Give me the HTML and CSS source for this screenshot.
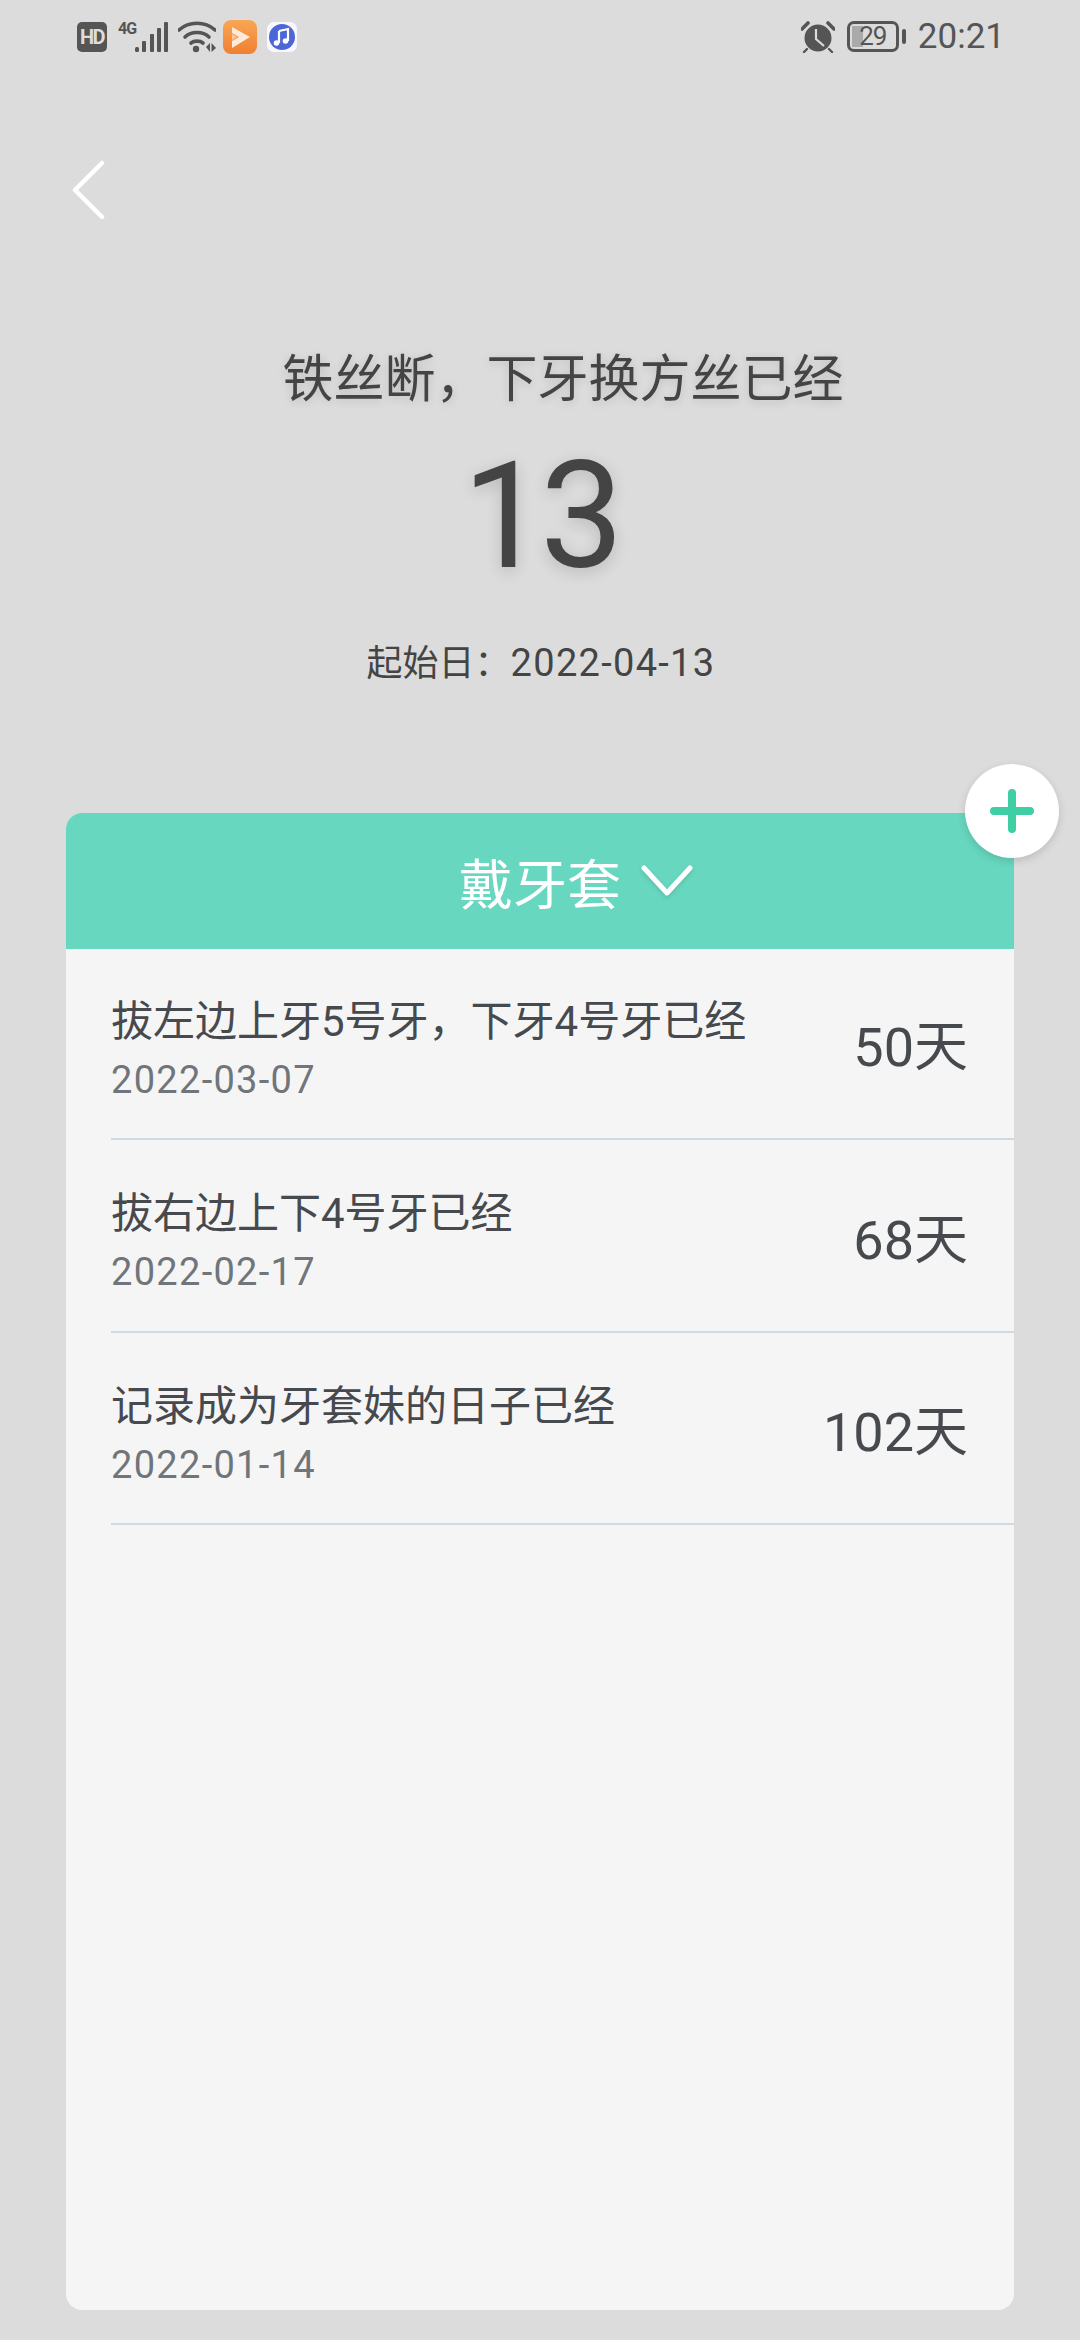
FILE: index.html
```html
<!DOCTYPE html>
<html>
<head>
    <title>戴牙套</title>
    <link rel="stylesheet" href="styles.css">
</head>
<body>
    <div class="status-bar">
        <div class="status-left">
            <span class="hd-badge">HD</span>
            <div class="signal">
                <span class="net-label">4G</span>
                <svg class="signal-bars" width="34" height="30" viewBox="0 0 34 30">
                    <rect x="0" y="25" width="4" height="5" rx="1.5"/>
                    <rect x="7" y="19" width="4" height="11" rx="1"/>
                    <rect x="15" y="12" width="4" height="18" rx="1"/>
                    <rect x="22" y="6" width="4" height="24" rx="1"/>
                    <rect x="29" y="0" width="4" height="30" rx="1"/>
                </svg>
            </div>
            <svg class="wifi" width="38" height="32" viewBox="0 0 38 32">
                <path d="M1 9 C11 0 27 0 37 9" fill="none" stroke="#555" stroke-width="3.6" stroke-linecap="round"/>
                <path d="M7 16 C13 10 25 10 31 16" fill="none" stroke="#555" stroke-width="3.6" stroke-linecap="round"/>
                <path d="M13 22 C16 19.5 22 19.5 25 22" fill="none" stroke="#555" stroke-width="3.6" stroke-linecap="round"/>
                <circle cx="18" cy="28" r="3.2" fill="#555"/>
                <path d="M28 26 L32 22 V31 Z M33.5 22 L38 27 L33.5 31 Z" fill="#555"/>
            </svg>
            <svg class="app-icon" width="34" height="34" viewBox="0 0 34 34">
                <defs>
                    <linearGradient id="orange" x1="0" y1="0" x2="0" y2="1">
                        <stop offset="0" stop-color="#f9a654"/>
                        <stop offset="1" stop-color="#f07f33"/>
                    </linearGradient>
                </defs>
                <rect width="34" height="34" rx="8" fill="url(#orange)"/>
                <path d="M9 7 L27 17 L9 28 V21 L16 17 L9 13 Z" fill="#fdeadb"/>
                <path d="M9 14 L14 17 L9 20 Z" fill="#f6c9a0"/>
            </svg>
            <svg class="app-icon" width="30" height="30" viewBox="0 0 30 30">
                <rect width="30" height="30" rx="7" fill="#f8f7fd"/>
                <circle cx="15" cy="15" r="13" fill="#4c66d8"/>
                <path d="M12 9 L21 7 V19" fill="none" stroke="#fff" stroke-width="2.2"/>
                <line x1="12" y1="9" x2="12" y2="21" stroke="#fff" stroke-width="2.2"/>
                <circle cx="9.5" cy="21" r="2.8" fill="#fff"/>
                <circle cx="18.5" cy="19" r="2.8" fill="#fff"/>
            </svg>
        </div>
        <div class="status-right">
            <svg class="alarm" width="34" height="32" viewBox="0 0 34 32">
                <circle cx="17" cy="17" r="13.5" fill="#555"/>
                <path d="M1 8 L7 2 M27 2 L33 8" stroke="#555" stroke-width="3.6" stroke-linecap="round"/>
                <path d="M6 28 L3 31 M28 28 L31 31" stroke="#555" stroke-width="2.4" stroke-linecap="round"/>
                <path d="M15 8 V18 L23 25" fill="none" stroke="#dcdcdc" stroke-width="2.2"/>
            </svg>
            <div class="battery">
                <div class="battery-body">
                    <div class="battery-fill"></div>
                    <span class="battery-num">29</span>
                </div>
                <div class="battery-tip"></div>
            </div>
            <span class="clock">20:21</span>
        </div>
    </div>

    <div class="back">
        <svg width="34" height="60" viewBox="0 0 34 60">
            <path d="M31 3 L4 30 L31 57" fill="none" stroke="#fff" stroke-width="4.5" stroke-linecap="round" stroke-linejoin="round"/>
        </svg>
    </div>

    <div class="hero">
        <div class="hero-title">铁丝断，下牙换方丝已经</div>
        <div class="hero-count">13</div>
        <div class="hero-date">起始日：<span class="num">2022-04-13</span></div>
    </div>

    <div class="card">
        <div class="add-btn">
            <svg width="44" height="44" viewBox="0 0 44 44">
                <path d="M22 4 V40 M4 22 H40" stroke="#40cfa5" stroke-width="8" stroke-linecap="round"/>
            </svg>
        </div>
        <div class="card-head">
            <span class="head-label">戴牙套
                <svg class="head-arrow" width="52" height="34" viewBox="0 0 52 34">
                    <path d="M3 4 L26 29 L49 4" fill="none" stroke="#fff" stroke-width="5" stroke-linecap="round" stroke-linejoin="round"/>
                </svg>
            </span>
        </div>
        <div class="row">
            <div class="row-info">
                <div class="row-title">拔左边上牙5号牙，下牙4号牙已经</div>
                <div class="row-date">2022-03-07</div>
            </div>
            <div class="row-days">50天</div>
        </div>
        <div class="row">
            <div class="row-info">
                <div class="row-title">拔右边上下4号牙已经</div>
                <div class="row-date">2022-02-17</div>
            </div>
            <div class="row-days">68天</div>
        </div>
        <div class="row">
            <div class="row-info">
                <div class="row-title">记录成为牙套妹的日子已经</div>
                <div class="row-date">2022-01-14</div>
            </div>
            <div class="row-days">102天</div>
        </div>
    </div>
</body>
</html>
```

FILE: styles.css
```css
body {
    font-family: Roboto, "Noto Sans CJK SC", sans-serif;
    background-color: #dcdcdc;
    color: #444;
    margin: 0;
    padding: 0;
    width: 1080px;
    height: 2340px;
    overflow: hidden;
}

/* status bar */
.status-bar {
    height: 72px;
    padding: 1px 75px 0 77px;
    box-sizing: border-box;
    display: flex;
    justify-content: space-between;
    align-items: center;
    color: #555;
}
.status-left {
    display: flex;
    align-items: center;
}
.status-right {
    display: flex;
    align-items: center;
}
.hd-badge {
    width: 30px;
    height: 30px;
    border-radius: 5px;
    background-color: #555;
    color: #ddd;
    font-size: 20px;
    font-weight: 700;
    line-height: 30px;
    text-align: center;
    letter-spacing: -1.5px;
}
.signal {
    display: flex;
    align-items: flex-end;
    margin-left: 11px;
    height: 30px;
}
.net-label {
    font-size: 16px;
    font-weight: 700;
    line-height: 14px;
    width: 17px;
    align-self: flex-start;
    letter-spacing: -1px;
}
.signal-bars {
    fill: #555;
}
.wifi {
    margin-left: 9px;
}
.app-icon {
    margin-left: 7px;
}
.app-icon + .app-icon {
    margin-left: 10px;
}
.battery {
    display: flex;
    align-items: center;
    margin-left: 12px;
}
.battery-body {
    position: relative;
    width: 52px;
    height: 31px;
    box-sizing: border-box;
    border: 3px solid #555;
    border-radius: 7px;
    text-align: center;
}
.battery-fill {
    position: absolute;
    left: 2px;
    top: 2px;
    bottom: 2px;
    width: 11px;
    background-color: #aaa;
}
.battery-num {
    position: relative;
    font-size: 26px;
    line-height: 25px;
    letter-spacing: -1px;
    display: block;
}
.battery-tip {
    width: 4px;
    height: 15px;
    margin-left: 3px;
    background-color: #555;
    border-radius: 2px;
}
.clock {
    margin-left: 12px;
    font-size: 35px;
}

/* back arrow */
.back {
    padding: 88px 0 0 71px;
    height: 60px;
}
.back svg {
    display: block;
}

/* counter */
.hero {
    text-align: center;
}
.hero-title {
    margin-top: 130px;
    padding-left: 46px;
    font-size: 51px;
    line-height: 60px;
    text-shadow: 0 2px 10px rgba(0, 0, 0, 0.14);
}
.hero-count {
    margin-top: 31px;
    font-size: 149px;
    line-height: 150px;
    letter-spacing: -6px;
    text-shadow: 0 4px 16px rgba(0, 0, 0, 0.16);
}
.hero-date {
    margin-top: 50px;
    padding-left: 2px;
    font-size: 36px;
    line-height: 44px;
}
.hero-date .num {
    font-size: 38px;
    letter-spacing: 1.3px;
}

/* list card */
.card {
    position: relative;
    margin: 127px 66px 0;
    height: 1497px;
    background-color: #f5f5f5;
    border-radius: 16px;
}
.card-head {
    height: 136px;
    margin-bottom: -1.5px;
    background-color: #68d7bf;
    border-radius: 16px 16px 0 0;
    display: flex;
    justify-content: center;
    align-items: center;
    color: #fff;
    font-size: 54px;
}
.head-label {
    position: relative;
}
.head-arrow {
    position: absolute;
    left: 182px;
    top: 22px;
    filter: drop-shadow(0 2px 2px rgba(0, 0, 0, 0.12));
}
.add-btn {
    position: absolute;
    top: -49px;
    right: -45px;
    width: 94px;
    height: 94px;
    border-radius: 50%;
    background-color: #fff;
    box-shadow: 0 3px 8px rgba(0, 0, 0, 0.14);
    display: flex;
    justify-content: center;
    align-items: center;
}
.row {
    height: 190.5px;
    margin-left: 45px;
    padding-right: 46px;
    border-bottom: 2px solid #cfdbe4;
    display: flex;
    justify-content: space-between;
    align-items: center;
}
.row-info {
    padding-top: 13px;
}
.row-title {
    font-size: 42px;
    line-height: 50px;
    color: #46494d;
}
.row-date {
    margin-top: 11px;
    font-size: 38px;
    line-height: 44px;
    letter-spacing: 1.3px;
    color: #70757a;
}
.row-days {
    font-size: 54px;
    color: #46494d;
}
```
